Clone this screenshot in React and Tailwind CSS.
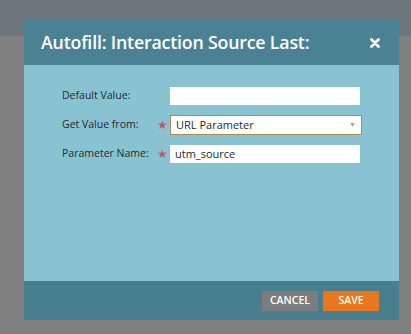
import React from "react";

const Field = ({ label, required, children }) => (
  <div className="flex items-center h-[20px]">
    <label className="w-[95px] text-[10.5px] text-[#1f2a30]">{label}</label>
    <span className="w-[13px] text-[12px] text-[#b8605f] leading-none">{required ? "★" : ""}</span>
    {children}
  </div>
);

const App = () => {
  return (
    <div
      className="relative w-[411px] h-[334px] bg-[#808080] overflow-hidden"
      style={{ fontFamily: "'Open Sans', 'Liberation Sans', sans-serif" }}
    >
      <div className="h-[36px] bg-[#6c747c]" />

      <div className="absolute left-[24px] top-[20px] w-[375px] h-[300px] flex flex-col">
        <div className="h-[45px] bg-[#4a8193] flex items-center justify-between pl-[17px] pr-[19px]">
          <h1 className="text-white text-[17.8px] font-semibold tracking-[-0.2px]">
            Autofill: Interaction Source Last:
          </h1>
          <svg width="10" height="10" viewBox="0 0 10 10">
            <path d="M1.5 1.5 L8.5 8.5 M8.5 1.5 L1.5 8.5" stroke="white" strokeWidth="2.8" strokeLinecap="round" />
          </svg>
        </div>

        <div className="flex-1 bg-[#89c3d2] pl-[38px] pt-[21px] flex flex-col gap-[9px]">
          <Field label="Default Value:">
            <input className="w-[190px] h-[18px] bg-white outline-none" />
          </Field>
          <Field label="Get Value from:" required>
            <div className="w-[192px] h-[20px] bg-white border border-[#b08a4e] flex items-center justify-between px-[5px]">
              <span className="text-[11px] text-[#1f2a30]">URL Parameter</span>
              <span className="text-[7px] text-[#9aa5ab]">▼</span>
            </div>
          </Field>
          <Field label="Parameter Name:" required>
            <div className="w-[190px] h-[18px] bg-white flex items-center px-[5px]">
              <span className="text-[11px] text-[#1f2a30]">utm_source</span>
            </div>
          </Field>
        </div>

        <div className="h-[39px] bg-[#477f8f] flex items-center justify-end gap-[5px] pr-[20px]">
          <button className="w-[56px] h-[20px] bg-[#7b7d7f] text-white text-[10.5px] font-semibold">
            CANCEL
          </button>
          <button className="w-[56px] h-[20px] bg-[#e8771e] text-white text-[10.5px] font-semibold">
            SAVE
          </button>
        </div>
      </div>
    </div>
  );
};

export default App;
